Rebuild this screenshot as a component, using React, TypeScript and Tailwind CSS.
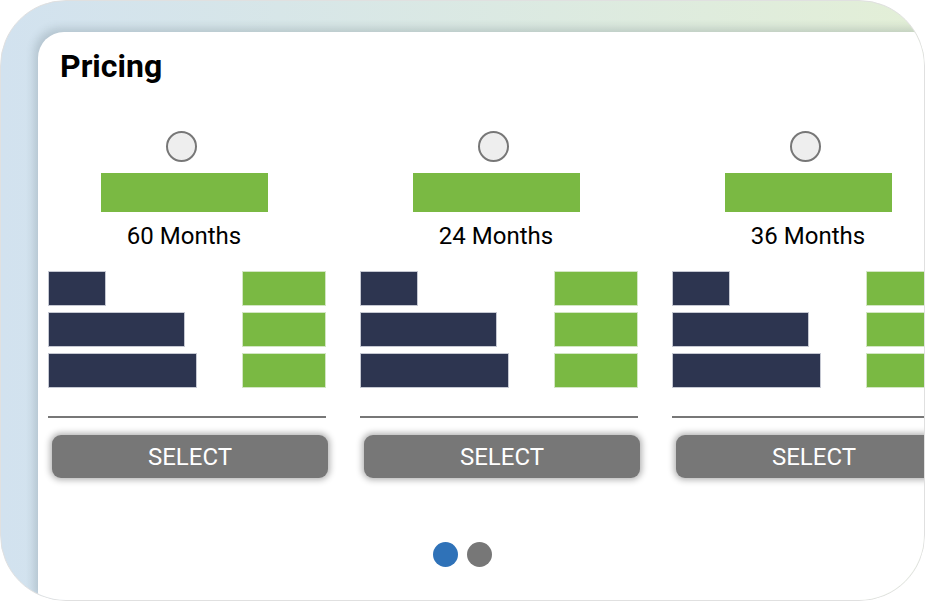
import React from 'react';

const plans = [
  { label: '60 Months' },
  { label: '24 Months' },
  { label: '36 Months' },
];

function PlanCard({ label }: { label: string }) {
  return (
    <div className="w-[278px] shrink-0 flex flex-col">
      <div className="ml-[118px] mt-[83px] w-[31px] h-[31px] rounded-full bg-[#eeeeee] border-2 border-[#777777]" />
      <div className="ml-[53px] mt-[11px] w-[167px] h-[39px] bg-[#7ab943]" />
      <div className="w-[272px] mt-[12px] text-center text-[24px] leading-[24px] text-black">{label}</div>
      <div className="mt-[23px] flex justify-between">
        <div className="flex flex-col gap-[6px]">
          <div className="w-[58px] h-[35px] bg-[#2d3550] border border-[#c5c8d2]" />
          <div className="w-[137px] h-[35px] bg-[#2d3550] border border-[#c5c8d2]" />
          <div className="w-[149px] h-[35px] bg-[#2d3550] border border-[#c5c8d2]" />
        </div>
        <div className="flex flex-col gap-[6px]">
          <div className="w-[84px] h-[35px] bg-[#7ab943] border border-[#d3e6c4]" />
          <div className="w-[84px] h-[35px] bg-[#7ab943] border border-[#d3e6c4]" />
          <div className="w-[84px] h-[35px] bg-[#7ab943] border border-[#d3e6c4]" />
        </div>
      </div>
      <div className="mt-[28px] h-[2px] bg-[#777777]" />
      <button className="ml-[4px] mt-[17px] w-[276px] h-[43px] rounded-[9px] bg-[#777777] text-white text-[24px] leading-none shadow-[0_0_6px_2px_rgba(0,0,0,0.3)]">
        SELECT
      </button>
    </div>
  );
}

export default function App() {
  return (
    <div className="w-[925px] h-[601px] bg-white" style={{ fontFamily: 'Roboto, "Liberation Sans", sans-serif' }}>
      <div className="relative w-[925px] h-[601px] rounded-[66px] overflow-hidden border border-[#e0e0e0] bg-gradient-to-r from-[#d2e2ef] to-[#e3efd7] pl-[37px] pt-[31px]">
        <div className="h-full bg-white rounded-tl-[26px] shadow-[-4px_-4px_8px_rgba(60,80,90,0.2)] overflow-hidden flex flex-col">
          <h1 className="pl-[22px] pt-[16px] text-[32px] leading-[36px] font-bold text-black">Pricing</h1>
          <div className="relative flex gap-[34px] pl-[10px] -mt-[36px]">
            {plans.map((p) => (
              <PlanCard key={p.label} label={p.label} />
            ))}
          </div>
          <div className="mt-[64px] flex justify-center gap-[9px] pr-[38px]">
            <div className="w-[25px] h-[25px] rounded-full bg-[#2f72b8]" />
            <div className="w-[25px] h-[25px] rounded-full bg-[#777777]" />
          </div>
        </div>
      </div>
    </div>
  );
}
